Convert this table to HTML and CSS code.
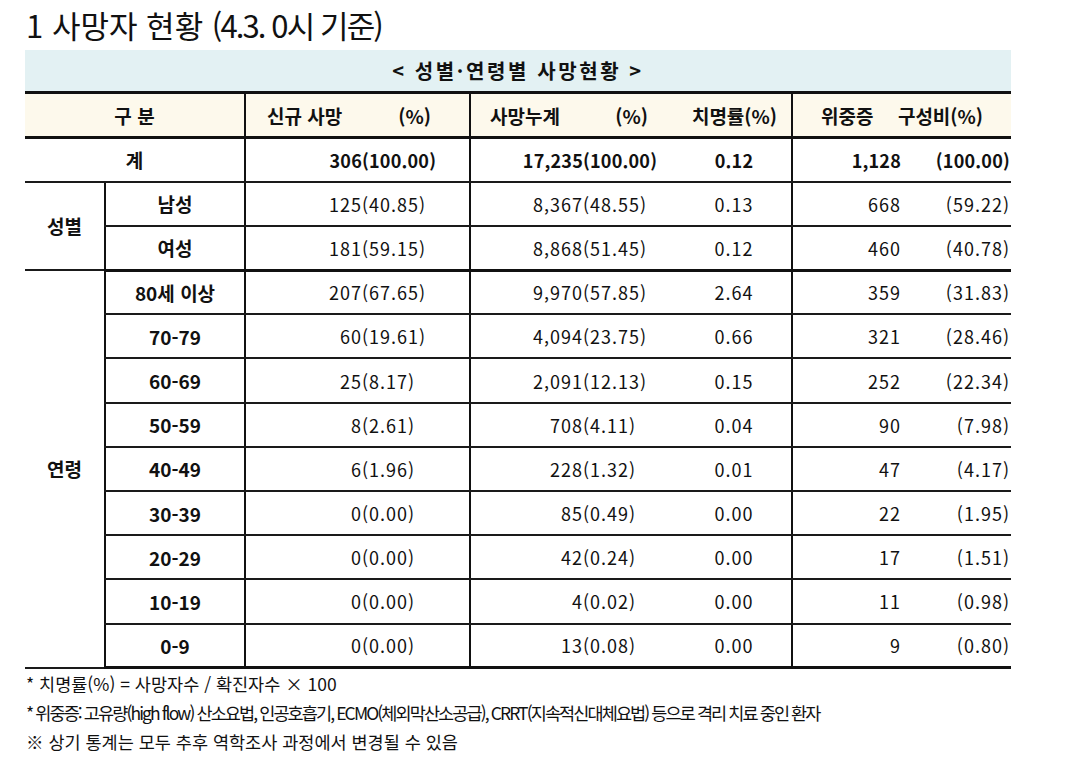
FILE: index.html
```html
<!DOCTYPE html>
<html lang="ko">
<head>
<meta charset="utf-8">
<title>사망자 현황</title>
<link rel="stylesheet" href="styles.css">
</head>
<body>
<div class="page">
  <h1 class="title">1 사망자 현황 <span class="sub">(4.3. 0시 기준)</span></h1>
  <div class="caption">&lt; 성별·연령별 사망현황 &gt;</div>
  <table class="stats">
    <colgroup>
      <col class="w1"><col class="w2"><col class="w3"><col class="w4"><col class="w5"><col class="w6"><col class="w7">
    </colgroup>
    <thead>
      <tr class="head">
        <th colspan="2">구 분</th>
        <th class="vl"><div class="hflex h3"><span>신규 사망</span><span>(%)</span></div></th>
        <th class="vl" colspan="2"><div class="hflex h4"><span>사망누계</span><span class="pc">(%)</span><span class="cf">치명률(%)</span></div></th>
        <th class="vl" colspan="2"><div class="hflex h6"><span>위중증</span><span>구성비(%)</span></div></th>
      </tr>
    </thead>
    <tbody>
      <tr class="total">
        <td colspan="2" class="c lab">계</td>
        <td class="vl a"><span class="n">306</span>(100.00)</td>
        <td class="vl b"><span class="n">17,235</span>(100.00)</td>
        <td class="c5">0.12</td>
        <td class="vl r6">1,128</td>
        <td class="r7">(100.00)</td>
      </tr>
      <tr>
        <td rowspan="2" class="c grp">성별</td>
        <td class="vl c lab">남성</td>
        <td class="vl a"><span class="n">125</span>(40.85)</td>
        <td class="vl b"><span class="n">8,367</span>(48.55)</td>
        <td class="c5">0.13</td>
        <td class="vl r6">668</td>
        <td class="r7">(59.22)</td>
      </tr>
      <tr class="secend">
        <td class="vl c lab">여성</td>
        <td class="vl a"><span class="n">181</span>(59.15)</td>
        <td class="vl b"><span class="n">8,868</span>(51.45)</td>
        <td class="c5">0.12</td>
        <td class="vl r6">460</td>
        <td class="r7">(40.78)</td>
      </tr>
      <tr>
        <td rowspan="9" class="c grp">연령</td>
        <td class="vl c lab">80세 이상</td>
        <td class="vl a"><span class="n">207</span>(67.65)</td>
        <td class="vl b"><span class="n">9,970</span>(57.85)</td>
        <td class="c5">2.64</td>
        <td class="vl r6">359</td>
        <td class="r7">(31.83)</td>
      </tr>
      <tr>
        <td class="vl c lab">70-79</td>
        <td class="vl a"><span class="n">60</span>(19.61)</td>
        <td class="vl b"><span class="n">4,094</span>(23.75)</td>
        <td class="c5">0.66</td>
        <td class="vl r6">321</td>
        <td class="r7">(28.46)</td>
      </tr>
      <tr>
        <td class="vl c lab">60-69</td>
        <td class="vl a"><span class="n">25</span>(8.17)</td>
        <td class="vl b"><span class="n">2,091</span>(12.13)</td>
        <td class="c5">0.15</td>
        <td class="vl r6">252</td>
        <td class="r7">(22.34)</td>
      </tr>
      <tr>
        <td class="vl c lab">50-59</td>
        <td class="vl a"><span class="n">8</span>(2.61)</td>
        <td class="vl b"><span class="n">708</span>(4.11)</td>
        <td class="c5">0.04</td>
        <td class="vl r6">90</td>
        <td class="r7">(7.98)</td>
      </tr>
      <tr>
        <td class="vl c lab">40-49</td>
        <td class="vl a"><span class="n">6</span>(1.96)</td>
        <td class="vl b"><span class="n">228</span>(1.32)</td>
        <td class="c5">0.01</td>
        <td class="vl r6">47</td>
        <td class="r7">(4.17)</td>
      </tr>
      <tr>
        <td class="vl c lab">30-39</td>
        <td class="vl a"><span class="n">0</span>(0.00)</td>
        <td class="vl b"><span class="n">85</span>(0.49)</td>
        <td class="c5">0.00</td>
        <td class="vl r6">22</td>
        <td class="r7">(1.95)</td>
      </tr>
      <tr>
        <td class="vl c lab">20-29</td>
        <td class="vl a"><span class="n">0</span>(0.00)</td>
        <td class="vl b"><span class="n">42</span>(0.24)</td>
        <td class="c5">0.00</td>
        <td class="vl r6">17</td>
        <td class="r7">(1.51)</td>
      </tr>
      <tr>
        <td class="vl c lab">10-19</td>
        <td class="vl a"><span class="n">0</span>(0.00)</td>
        <td class="vl b"><span class="n">4</span>(0.02)</td>
        <td class="c5">0.00</td>
        <td class="vl r6">11</td>
        <td class="r7">(0.98)</td>
      </tr>
      <tr class="last">
        <td class="vl c lab">0-9</td>
        <td class="vl a"><span class="n">0</span>(0.00)</td>
        <td class="vl b"><span class="n">13</span>(0.08)</td>
        <td class="c5">0.00</td>
        <td class="vl r6">9</td>
        <td class="r7">(0.80)</td>
      </tr>
    </tbody>
  </table>
  <div class="notes">
    <p class="note">* 치명률(%) = 사망자수 / 확진자수 × 100</p>
    <p class="note tight">* 위중증: 고유량(high flow) 산소요법, 인공호흡기, ECMO(체외막산소공급), CRRT(지속적신대체요법) 등으로 격리 치료 중인 환자</p>
    <p class="note">※ 상기 통계는 모두 추후 역학조사 과정에서 변경될 수 있음</p>
  </div>
</div>
</body>
</html>
```

FILE: styles.css
```css
* { box-sizing: border-box; }
html, body { margin: 0; padding: 0; background: #fff; }
body {
  font-family: "Noto Sans CJK KR", "Noto Sans", sans-serif;
  color: #111;
}
.page {
  padding: 4px 0 0 25px;
  width: 1011px;
}
.title {
  margin: 0 0 0 1px;
  font-size: 31px;
  font-weight: 400;
  line-height: 42px;
  height: 46px;
}
.title .sub {
  letter-spacing: -1.9px;
}
.caption {
  height: 41px;
  background: #e3f1f3;
  text-align: center;
  font-weight: 700;
  font-size: 20px;
  line-height: 41px;
  letter-spacing: 2.6px;
}
.stats {
  border-collapse: collapse;
  table-layout: fixed;
  width: 986px;
  font-size: 18px;
}
.w1 { width: 80px; }
.w2 { width: 140px; }
.w3 { width: 225px; }
.w4 { width: 220px; }
.w5 { width: 102px; }
.w6 { width: 123px; }
.w7 { width: 96px; }

.stats th, .stats td {
  padding: 0;
  height: 44.2px;
  white-space: nowrap;
  border-bottom: 2px solid #1a1a1a;
  letter-spacing: 1px;
}
.stats .vl { border-left: 2px solid #111; }
.head th {
  background: #fdf9ec;
  font-weight: 700;
  font-size: 19px;
  letter-spacing: 0;
  border-top: 3px solid #111;
  border-bottom: 3px solid #111;
  height: 45px;
}
.hflex { display: flex; align-items: center; }
.h3 { justify-content: space-between; padding: 0 38px 0 21px; }
.h4 { padding: 0 14px 0 19px; }
.h4 .pc { margin-left: auto; }
.h4 .cf { margin-left: 44px; }
.h6 { justify-content: space-between; padding: 0 28px 0 28px; }

.total td { font-weight: 700; letter-spacing: 0.2px; }
.secend td { border-bottom: 3px solid #111; }
.last td { border-bottom: 3px solid #111; }
.grp { font-weight: 700; font-size: 19px; letter-spacing: 0 !important; border-bottom: 3px solid #111; }
.lab { font-weight: 700; font-size: 19px; letter-spacing: 0 !important; }
.c { text-align: center; }
.c5 { text-align: center; padding-right: 13px !important; }
.n { display: inline-block; text-align: right; }
.a .n { width: 116px; }
.b .n { width: 112px; }
.r6 { text-align: right; padding-right: 14px !important; }
.r7 { text-align: right; padding-right: 1px !important; }

.notes { padding: 0 0 0 1px; }
.note {
  margin: 0;
  font-size: 17.5px;
  line-height: 29px;
}
.note.tight { letter-spacing: -1.9px; }
```
